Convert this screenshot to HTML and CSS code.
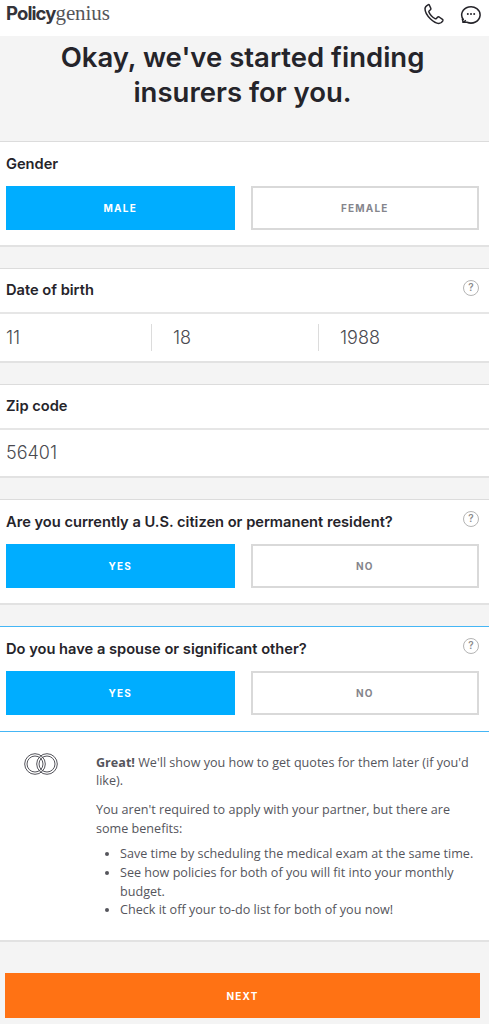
FILE: index.html
```html
<!DOCTYPE html>
<html lang="en">
<head>
<meta charset="utf-8">
<title>Policygenius</title>
<link rel="stylesheet" href="styles.css">
</head>
<body>
<header class="topbar">
  <div class="logo"><span class="logo-a">Policy</span><span class="logo-b">genius</span></div>
  <div class="top-icons">
    <svg class="icon-phone" viewBox="0 0 22 22" width="22" height="22"><path d="M5 1.800c-1.600.8-3 2.200-3 4 0 3.500 2.600 7.300 5.300 9.900 2.500 2.400 5.700 4.700 8.500 4.700 1.800 0 3.200-1.100 4-2.600.3-.6.200-1-.3-1.400l-3.400-2.400c-.5-.3-1-.3-1.400.1l-1.300 1.400c-.4.400-.8.400-1.300.2-1.400-.7-2.700-1.800-3.800-3-1-1.100-1.900-2.400-2.400-3.700-.2-.5-.1-.9.300-1.200l1.300-1.100c.5-.4.500-.9.300-1.400L6.400 2.200C6.100 1.700 5.600 1.500 5 1.800z" fill="none" stroke="#25242a" stroke-width="1.500" stroke-linejoin="round"/></svg>
    <svg class="icon-chat" viewBox="0 0 22 22" width="22" height="22"><path d="M3.300 16.500A9.200 8.200 0 1 1 7 19.300c-1 0-2.400 0-3.800-.1" fill="none" stroke="#25242a" stroke-width="1.500" stroke-linecap="round"/><path d="M2.300 15.800l.8 3.500 2.800-2" fill="none" stroke="#25242a" stroke-width="1.500" stroke-linejoin="round"/><circle cx="7.800" cy="11" r="1" fill="#25242a"/><circle cx="11" cy="11" r="1" fill="#25242a"/><circle cx="14.200" cy="11" r="1" fill="#25242a"/></svg>
  </div>
</header>
<section class="hero"><h1>Okay, we've started finding<br>insurers for you.</h1></section>

<section class="card">
  <div class="label-row"><span class="label">Gender</span></div>
  <div class="choices"><div class="choice on">MALE</div><div class="choice">FEMALE</div></div>
</section>

<section class="card field">
  <div class="label-row ruled"><span class="label">Date of birth</span><span class="help">?</span></div>
  <div class="date-row"><div class="date-cell first">11</div><div class="date-cell">18</div><div class="date-cell">1988</div></div>
</section>

<section class="card field">
  <div class="label-row ruled"><span class="label">Zip code</span></div>
  <div class="value-row">56401</div>
</section>

<section class="card">
  <div class="label-row"><span class="label">Are you currently a U.S. citizen or permanent resident?</span><span class="help">?</span></div>
  <div class="choices"><div class="choice on">YES</div><div class="choice">NO</div></div>
</section>

<section class="card active">
  <div class="label-row"><span class="label">Do you have a spouse or significant other?</span><span class="help">?</span></div>
  <div class="choices"><div class="choice on">YES</div><div class="choice">NO</div></div>
</section>

<section class="info">
  <svg class="rings" viewBox="0 0 34 22" width="34" height="22"><g fill="none" stroke="#55555c" stroke-width="1"><circle cx="11" cy="11" r="10.300"/><circle cx="11" cy="11" r="8"/><circle cx="23" cy="11" r="10.300"/><circle cx="23" cy="11" r="8"/></g></svg>
  <div class="info-text">
    <p><strong>Great!</strong> We'll show you how to get quotes for them later (if you'd like).</p>
    <p>You aren't required to apply with your partner, but there are some benefits:</p>
    <ul>
      <li>Save time by scheduling the medical exam at the same time.</li>
      <li>See how policies for both of you will fit into your monthly budget.</li>
      <li>Check it off your to-do list for both of you now!</li>
    </ul>
  </div>
</section>

<div class="next-wrap"><div class="next">NEXT</div></div>
</body>
</html>
```

FILE: styles.css
```css
* { box-sizing: border-box; }
html, body { margin: 0; padding: 0; }
body { background: #f4f4f4; color: #25242a; font-family: "Inter", "Liberation Sans", sans-serif; height: 1024px; overflow: hidden; }
.topbar { height: 36px; background: #fff; display: flex; justify-content: space-between; align-items: flex-start; padding: 3px 7px 0 6px; }
.logo { font-size: 18px; line-height: 20px; white-space: nowrap; }
.logo-a { font-family: "Inter", sans-serif; font-weight: 700; font-size: 18.500px; color: #34343a; letter-spacing: -0.9px; }
.logo-b { font-family: "Liberation Serif", serif; font-size: 21px; color: #55555a; letter-spacing: -0.1px; }
.top-icons { display: flex; gap: 15px; }
.icon-phone, .icon-chat { display: block; }
.hero { height: 105px; text-align: center; padding-right: 4px; }
.hero h1 { margin: 0; padding-top: 4px; font-size: 27.500px; line-height: 35px; font-weight: 600; color: #25242a; }
.card { background: #fff; border-top: 1px solid #dcdcdc; border-bottom: 2px solid #e2e2e2; height: 106px; margin-bottom: 21px; }
.card.field { height: auto; }
.card.active { border-top: 1px solid #45b6f5; border-bottom: 1px solid #45b6f5; margin-bottom: 0; }
.label-row { height: 44px; display: flex; justify-content: space-between; align-items: center; padding: 0 10px 1px 6px; position: relative; }
.label-row.ruled { height: 45px; border-bottom: 2px solid #e6e6e6; padding-bottom: 1px; }
.label { font-size: 14.650px; font-weight: 600; color: #25242a; white-space: nowrap; }
.help { position: absolute; right: 10px; top: 11px; width: 16px; height: 16px; border: 1.500px solid #b4b4b4; border-radius: 50%; color: #8c8c8c; font-size: 10px; font-weight: 600; line-height: 13px; text-align: center; }
.choices { display: flex; gap: 16px; padding: 0 10px 0 6px; }
.choice { flex: 1; height: 44px; display: flex; align-items: center; justify-content: center; border: 2px solid #d9d9d9; background: #fff; font-size: 10px; font-weight: 700; letter-spacing: 1.200px; color: #85858c; }
.choice.on { background: #00adff; border-color: #00adff; color: #fff; }
.date-row { display: flex; align-items: center; height: 47px; }
.date-cell { font-size: 18px; font-weight: 300; color: #4a4a50; height: 27px; line-height: 27px; border-left: 1px solid #dcdcdc; padding-left: 21px; width: 167px; }
.date-cell.first { border-left: 0; padding-left: 6px; width: 151px; }
.value-row { height: 46px; line-height: 46px; padding-left: 6px; font-size: 18px; font-weight: 300; color: #4a4a50; }
.info { background: #fff; border-bottom: 2px solid #e2e2e2; height: 210px; display: flex; }
.rings { flex: none; margin: 21px 0 0 24px; }
.info-text { margin-left: 38px; padding-top: 21.500px; width: 386px; font-family: "Open Sans", sans-serif; font-size: 12.600px; line-height: 18.700px; color: #55555c; }
.info-text p { margin: 0 0 10.500px; }
.info-text p + ul { margin-top: -4px; }
.info-text strong { font-weight: 700; }
.info-text ul { padding: 0 0 0 24px; margin-bottom: 0; }
.next-wrap { padding: 31px 9px 0 5px; }
.next { height: 45px; background: #ff7214; color: #fff; display: flex; align-items: center; justify-content: center; font-size: 10px; font-weight: 700; letter-spacing: 1.200px; }
```
